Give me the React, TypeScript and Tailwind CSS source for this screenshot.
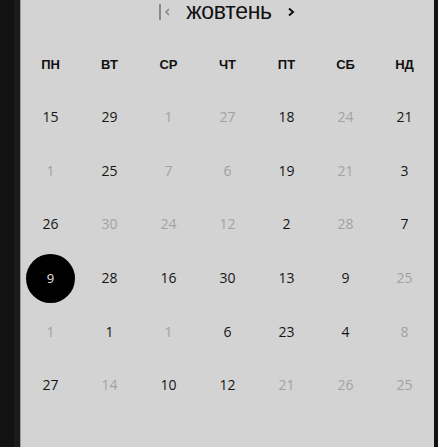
import React from 'react'

const days: [string, boolean][][] = [
  [['15', true], ['29', true], ['1', false], ['27', false], ['18', true], ['24', false], ['21', true]],
  [['1', false], ['25', true], ['7', false], ['6', false], ['19', true], ['21', false], ['3', true]],
  [['26', true], ['30', false], ['24', false], ['12', false], ['2', true], ['28', false], ['7', true]],
  [['9', true], ['28', true], ['16', true], ['30', true], ['13', true], ['9', true], ['25', false]],
  [['1', false], ['1', true], ['1', false], ['6', true], ['23', true], ['4', true], ['8', false]],
  [['27', true], ['14', false], ['10', true], ['12', true], ['21', false], ['26', false], ['25', false]],
]

const weekdays = ['ПН', 'ВТ', 'СР', 'ЧТ', 'ПТ', 'СБ', 'НД']

export default function App() {
  return (
    <div className="flex h-[447px] w-[438px] overflow-hidden bg-[#121212] font-['Liberation_Sans',sans-serif]">
      <div className="w-[14px] bg-[#121212]" />
      <div className="w-[6px] bg-[#1b1b1b]" />
      <div className="flex flex-1 flex-col border-l border-[#9c9c9c] bg-[#d3d3d3]">
        <div className="flex h-[23px] items-center justify-center">
          <span className="flex items-center">
            <span className="h-[16px] w-[2px] bg-[#8a8a8a]" />
            <svg width="9" height="10" viewBox="0 0 9 10" className="ml-[2px]">
              <path d="M6 2 L3 5 L6 8" fill="none" stroke="#8a8a8a" strokeWidth="1.6" />
            </svg>
          </span>
          <span className="ml-[14px] text-[23px] leading-[23px] tracking-[-0.3px] text-[#111]">жовтень</span>
          <svg width="10" height="12" viewBox="0 0 10 12" className="ml-[14px]">
            <path d="M3 2.5 L7 6 L3 9.5" fill="none" stroke="#111" strokeWidth="2" />
          </svg>
        </div>
        <div className="mt-[15px] grid grid-cols-7">
          {weekdays.map((w) => (
            <div key={w} className="flex h-[54px] items-center justify-center text-[13px] font-bold text-[#111]">
              {w}
            </div>
          ))}
          {days.map((row, r) =>
            row.map(([n, dark], c) => {
              const selected = r === 3 && c === 0
              return (
                <div
                  key={`${r}-${c}`}
                  className="flex h-[53.6px] items-center justify-center pb-[3px] font-['Open_Sans',sans-serif] text-[14px] leading-none"
                >
                  {selected ? (
                    <span className="flex h-[49px] w-[49px] items-center justify-center rounded-full bg-black text-[13px] text-[#e5e5e5]">
                      {n}
                    </span>
                  ) : (
                    <span className={dark ? 'text-[#161616]' : 'text-[#a2a2a2]'}>{n}</span>
                  )}
                </div>
              )
            })
          )}
        </div>
      </div>
      <div className="w-[4px] bg-[#121212]" />
    </div>
  )
}
